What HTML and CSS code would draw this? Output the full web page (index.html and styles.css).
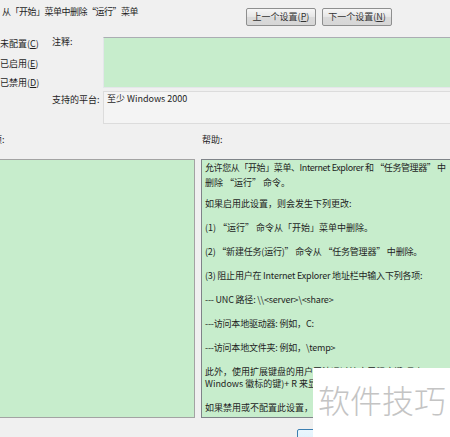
FILE: index.html
```html
<!DOCTYPE html>
<html lang="zh-CN">
<head>
<meta charset="utf-8">
<title>从「开始」菜单中删除“运行”菜单</title>
<link rel="stylesheet" href="styles.css">
</head>
<body>
<div class="page">
  <div class="top">
    <div class="title">从「开始」菜单中删除“运行”菜单</div>
    <div class="nav">
      <button class="btn">上一个设置(<u>P</u>)</button>
      <button class="btn">下一个设置(<u>N</u>)</button>
    </div>
  </div>
  <div class="upper">
    <div class="radios">
      <div class="radio">未配置(<u>C</u>)</div>
      <div class="radio">已启用(<u>E</u>)</div>
      <div class="radio">已禁用(<u>D</u>)</div>
    </div>
    <div class="fields">
      <div class="row">
        <div class="label">注释:</div>
        <div class="comment"></div>
      </div>
      <div class="row row2">
        <div class="label label2">支持的平台:</div>
        <div class="platform">至少 Windows 2000</div>
      </div>
    </div>
  </div>
  <div class="heads">
    <span class="head-opt">选项:</span>
    <span class="head-help">帮助:</span>
  </div>
  <div class="panes">
    <div class="options"></div>
    <div class="help">
      <p class="first"><span class="tight">允许您从「开始」菜单、Internet Explorer 和 “任务管理器” 中</span><br>删除 “运行” 命令。</p>
      <p>如果启用此设置，则会发生下列更改:</p>
      <p>(1) “运行” 命令从「开始」菜单中删除。</p>
      <p class="snug">(2) “新建任务(运行)” 命令从 “任务管理器” 中删除。</p>
      <p class="snug">(3) 阻止用户在 Internet Explorer 地址栏中输入下列各项:</p>
      <p class="snug">--- UNC 路径: \\&lt;server&gt;\&lt;share&gt;</p>
      <p class="snug">---访问本地驱动器: 例如，C:</p>
      <p class="snug">---访问本地文件夹: 例如，\temp&gt;</p>
      <p>此外，使用扩展键盘的用户无法通过按应用程序键(具有<br>Windows 徽标的键)+ R 来显示“运行”对话框。</p>
      <p>如果禁用或不配置此设置，用户将能够访问“运行”命令。</p>
    </div>
  </div>
  <div class="footer">
    <button class="btn ok">确定</button>
  </div>
  <div class="watermark">软件技巧</div>
</div>
</body>
</html>
```
FILE: styles.css
```css
html, body {
  margin: 0;
  padding: 0;
  background: #f0f0f0;
  overflow: hidden;
}
body {
  font-family: "Noto Sans CJK SC", "Noto Sans", sans-serif;
  font-size: 9px;
  color: #1e1e1e;
}
.page {
  position: relative;
  width: 470px;
  height: 437px;
  overflow: hidden;
}
u { text-decoration: underline; }

.top {
  display: grid;
  grid-template-columns: 246px auto;
  height: 37px;
}
.title {
  padding: 6px 0 0 2px;
  line-height: 12px;
  letter-spacing: -0.5px;
  white-space: nowrap;
}
.nav {
  display: flex;
  gap: 6px;
  padding-top: 8px;
}
.btn {
  box-sizing: border-box;
  width: 70px;
  height: 18px;
  padding: 0;
  font-family: inherit;
  font-size: 9px;
  line-height: 14px;
  color: #333;
  border: 1px solid #8e8f8f;
  border-radius: 2px;
  background: linear-gradient(#f6f6f6, #e6e6e6 50%, #dadada 51%, #d6d6d6);
}

.upper {
  display: flex;
}
.radios {
  width: 52px;
  display: flex;
  flex-direction: column;
  gap: 7.5px;
  padding-top: 1px;
}
.radio {
  line-height: 12px;
  white-space: nowrap;
}
.fields {
  flex: 1;
  display: flex;
  flex-direction: column;
}
.row {
  display: flex;
}
.row2 {
  margin-top: 3px;
}
.label {
  width: 51px;
  line-height: 10px;
  white-space: nowrap;
}
.label2 {
  padding-top: 3px;
  line-height: 12px;
}
.comment {
  flex: 1;
  box-sizing: border-box;
  height: 51px;
  background: #c7edcc;
  border: 1px solid #e4e6ea;
  border-top-color: #abadb3;
}
.platform {
  flex: 1;
  box-sizing: border-box;
  height: 33px;
  padding: 1px 3px;
  line-height: 12px;
  background: #f4f4f4;
  border: 1px solid #dcdcdc;
}

.heads {
  display: flex;
  height: 35px;
  box-sizing: border-box;
  padding-top: 10px;
  line-height: 12px;
}
.head-opt {
  margin-left: -16px;
  width: 218px;
}

.panes {
  display: flex;
  gap: 6px;
  height: 259px;
}
.options {
  box-sizing: border-box;
  width: 205px;
  margin-left: -10px;
  background: #c7edcc;
  border: 1px solid #a3a3a3;
}
.help {
  flex: 1;
  box-sizing: border-box;
  background: #c7edcc;
  border: 1px solid #7f8388;
  padding: 0 3px;
  overflow: hidden;
}
.help p {
  margin: 0 0 12px;
  line-height: 12px;
  white-space: nowrap;
}
.help p.first {
  line-height: 15px;
  margin-bottom: 8px;
}
.help p.snug {
  letter-spacing: -0.2px;
}
.tight {
  letter-spacing: -0.4px;
}

.footer {
  padding: 11px 0 0 297px;
}
.ok {
  height: 20px;
  border-color: #3c7fb1;
  background: linear-gradient(#eaf6fd, #d9f0fc);
}

.watermark {
  position: absolute;
  left: 313px;
  top: 368px;
  width: 160px;
  height: 80px;
  box-sizing: border-box;
  padding: 15px 0 0 5px;
  background: #ffffff;
  color: #c4c4c4;
  font-size: 32px;
  line-height: 32px;
  font-weight: 300;
  white-space: nowrap;
}
```
